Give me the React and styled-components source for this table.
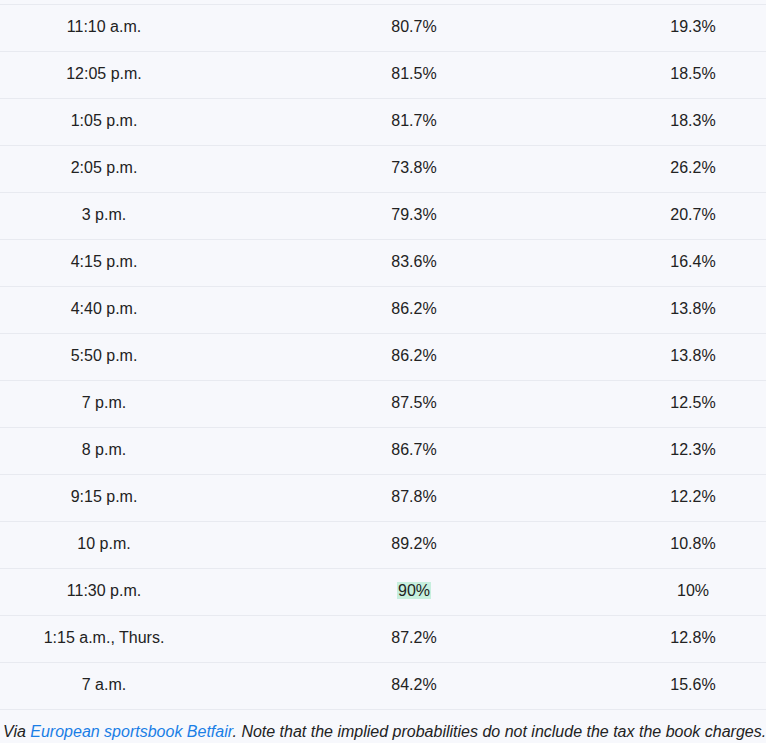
import React from 'react'
import styled, { createGlobalStyle } from 'styled-components'

const rows = [
  ['11:10 a.m.', '80.7%', '19.3%'],
  ['12:05 p.m.', '81.5%', '18.5%'],
  ['1:05 p.m.', '81.7%', '18.3%'],
  ['2:05 p.m.', '73.8%', '26.2%'],
  ['3 p.m.', '79.3%', '20.7%'],
  ['4:15 p.m.', '83.6%', '16.4%'],
  ['4:40 p.m.', '86.2%', '13.8%'],
  ['5:50 p.m.', '86.2%', '13.8%'],
  ['7 p.m.', '87.5%', '12.5%'],
  ['8 p.m.', '86.7%', '12.3%'],
  ['9:15 p.m.', '87.8%', '12.2%'],
  ['10 p.m.', '89.2%', '10.8%'],
  ['11:30 p.m.', '90%', '10%', true],
  ['1:15 a.m., Thurs.', '87.2%', '12.8%'],
  ['7 a.m.', '84.2%', '15.6%'],
]

function App() {
  return (
    <>
      <GlobalStyle />
      <Wrapper>
        <Table>
          {rows.map(([time, a, b, peak]) => (
            <Row key={time}>
              <Cell>{time}</Cell>
              <Cell>{peak ? <Highlight>{a}</Highlight> : a}</Cell>
              <Cell>{b}</Cell>
            </Row>
          ))}
        </Table>
        <Caption>
          Via <a href="#">European sportsbook Betfair</a>. Note that the implied probabilities do not include the tax the book charges.
        </Caption>
      </Wrapper>
    </>
  )
}

export default App

const GlobalStyle = createGlobalStyle`
  html, body {
    margin: 0;
    padding: 0;
    background: #f7f8fc;
  }
  body {
    font-family: 'Liberation Sans', Arial, sans-serif;
    color: #222;
  }
`

const Wrapper = styled.div`
  padding-top: 4px;
`

const Table = styled.div`
  display: flex;
  flex-direction: column;
  border-bottom: 1px solid #e8eaf0;
`

const Row = styled.div`
  display: grid;
  grid-template-columns: 208px 412px 146px;
  height: 46px;
  padding-bottom: 2px;
  box-sizing: border-box;
  height: 47px;
  align-items: center;
  border-top: 1px solid #e8eaf0;
`

const Cell = styled.div`
  text-align: center;
  font-size: 16px;
  line-height: 20px;
`

const Highlight = styled.span`
  background: #c7efde;
  padding: 0 1px;
`

const Caption = styled.p`
  margin: 0;
  padding: 12px 0 0 3px;
  font-size: 16px;
  font-style: italic;
  line-height: 20px;
  white-space: nowrap;
  color: #222;

  a {
    color: #1a7ee6;
    text-decoration: none;
  }
`
